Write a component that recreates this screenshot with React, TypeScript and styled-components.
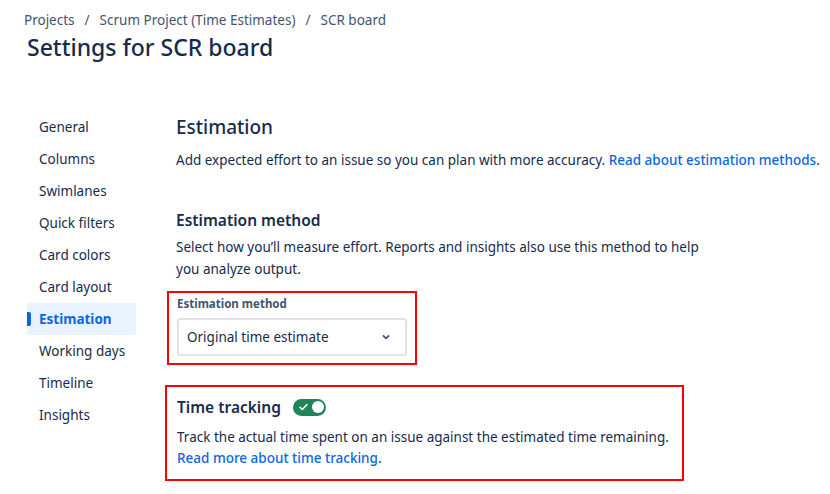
import React from "react";
import styled, { createGlobalStyle } from "styled-components";

const GlobalStyle = createGlobalStyle`
  html, body {
    margin: 0;
    padding: 0;
    background: #ffffff;
  }
  body {
    font-family: "Noto Sans", "Open Sans", sans-serif;
    color: #172b4d;
    -webkit-font-smoothing: antialiased;
  }
`;

const navItems = [
  "General",
  "Columns",
  "Swimlanes",
  "Quick filters",
  "Card colors",
  "Card layout",
  "Estimation",
  "Working days",
  "Timeline",
  "Insights",
];

const Page = styled.div`
  width: 830px;
  height: 494px;
  overflow: hidden;
  padding: 10px 0 0 24px;
  box-sizing: border-box;
`;

const Breadcrumbs = styled.nav`
  display: flex;
  align-items: center;
  gap: 10px;
  font-size: 13.5px;
  line-height: 20px;
  color: #44546f;
`;

const Sep = styled.span`
  color: #44546f;
`;

const Title = styled.h1`
  margin: 3px 0 0 3px;
  font-size: 23px;
  line-height: 28px;
  font-weight: 500;
  color: #172b4d;
`;

const Body = styled.div`
  display: flex;
  margin-top: 50px;
`;

const Sidebar = styled.ul`
  list-style: none;
  margin: 0;
  padding: 0 0 0 3px;
  width: 109px;
  display: flex;
  flex-direction: column;
`;

const NavItem = styled.li<{ $active?: boolean }>`
  position: relative;
  height: 32px;
  display: flex;
  align-items: center;
  padding-left: 12px;
  border-radius: 3px;
  font-size: 13.5px;
  font-weight: ${(p) => (p.$active ? 700 : 400)};
  color: ${(p) => (p.$active ? "#0c66e4" : "#172b4d")};
  background: ${(p) => (p.$active ? "#e9f2ff" : "transparent")};

  &::before {
    content: "";
    display: ${(p) => (p.$active ? "block" : "none")};
    position: absolute;
    left: 0;
    top: 9px;
    width: 4px;
    height: 14px;
    border-radius: 0 2px 2px 0;
    background: #0c66e4;
  }
`;

const Content = styled.main`
  margin-left: 40px;
  display: flex;
  flex-direction: column;
`;

const PageHeading = styled.h2`
  margin: 4px 0 0;
  font-size: 19px;
  line-height: 24px;
  font-weight: 500;
  color: #172b4d;
`;

const Text = styled.p<{ $width?: number; $lh?: number }>`
  margin: 0;
  font-size: 13.5px;
  line-height: ${(p) => p.$lh ?? 22}px;
  color: #172b4d;
  max-width: ${(p) => (p.$width ? `${p.$width}px` : "none")};
`;

const Lead = styled(Text)`
  margin-top: 10px;
`;

const Link = styled.a`
  color: #0c66e4;
  text-decoration: none;
  font-weight: 500;
`;

const Section = styled.section`
  margin-top: 38px;
`;

const SubHeading = styled.h3`
  margin: 0 0 5px;
  font-size: 15.5px;
  line-height: 22px;
  font-weight: 600;
  color: #172b4d;
`;

const Highlight = styled.div<{ $width: number; $left: number }>`
  border: 2px solid #ff0000;
  width: ${(p) => p.$width}px;
  margin-left: -${(p) => p.$left}px;
  box-sizing: border-box;
`;

const FieldBox = styled(Highlight)`
  margin-top: 11px;
  padding: 3px 8px 7px 8px;
`;

const TrackingBox = styled(Highlight)`
  margin-top: 20px;
  padding: 9px 10px 10px 10px;
`;

const Label = styled.label`
  display: block;
  font-size: 11.5px;
  line-height: 16px;
  font-weight: 700;
  color: #44546f;
  margin-bottom: 6px;
`;

const Select = styled.div`
  display: flex;
  align-items: center;
  justify-content: space-between;
  height: 38px;
  box-sizing: border-box;
  border: 2px solid #e1e3e8;
  border-radius: 3px;
  background: #ffffff;
  padding: 0 10px 0 8px;
  font-size: 13.5px;
  color: #172b4d;
`;

const HeadingRow = styled.div`
  display: flex;
  align-items: center;
  gap: 12px;
  margin-bottom: 9px;
`;

const TrackingHeading = styled(SubHeading)`
  margin: 0;
`;

const Toggle = styled.span`
  display: inline-flex;
  align-items: center;
  justify-content: space-between;
  width: 33px;
  height: 17px;
  border-radius: 9px;
  background: #1f845a;
  padding: 0 2px 0 6px;
  box-sizing: border-box;
`;

const Knob = styled.span`
  width: 12px;
  height: 12px;
  border-radius: 50%;
  background: #ffffff;
`;

const Chevron = () => (
  <svg width="18" height="18" viewBox="0 0 24 24">
    <path
      d="M8.5 10.5l3.5 3.3 3.5-3.3"
      fill="none"
      stroke="#44546f"
      strokeWidth="2.4"
      strokeLinecap="round"
      strokeLinejoin="round"
    />
  </svg>
);

const Check = () => (
  <svg width="9" height="8" viewBox="0 0 9 8">
    <path
      d="M1 4.2l2.3 2.2L8 1.5"
      fill="none"
      stroke="#ffffff"
      strokeWidth="1.5"
      strokeLinecap="round"
      strokeLinejoin="round"
    />
  </svg>
);

export default function App() {
  return (
    <Page>
      <GlobalStyle />
      <Breadcrumbs>
        <span>Projects</span>
        <Sep>/</Sep>
        <span>Scrum Project (Time Estimates)</span>
        <Sep>/</Sep>
        <span>SCR board</span>
      </Breadcrumbs>
      <Title>Settings for SCR board</Title>
      <Body>
        <Sidebar>
          {navItems.map((item) => (
            <NavItem key={item} $active={item === "Estimation"}>
              {item}
            </NavItem>
          ))}
        </Sidebar>
        <Content>
          <PageHeading>Estimation</PageHeading>
          <Lead>
            Add expected effort to an issue so you can plan with more accuracy.{" "}
            <Link href="#">Read about estimation methods</Link>.
          </Lead>
          <Section>
            <SubHeading>Estimation method</SubHeading>
            <Text $width={540}>
              Select how you’ll measure effort. Reports and insights also use
              this method to help you analyze output.
            </Text>
            <FieldBox $width={250} $left={9}>
              <Label>Estimation method</Label>
              <Select>
                <span>Original time estimate</span>
                <Chevron />
              </Select>
            </FieldBox>
            <TrackingBox $width={519} $left={11}>
              <HeadingRow>
                <TrackingHeading>Time tracking</TrackingHeading>
                <Toggle>
                  <Check />
                  <Knob />
                </Toggle>
              </HeadingRow>
              <Text $lh={21}>
                Track the actual time spent on an issue against the estimated
                time remaining.
                <br />
                <Link href="#">Read more about time tracking</Link>.
              </Text>
            </TrackingBox>
          </Section>
        </Content>
      </Body>
    </Page>
  );
}
